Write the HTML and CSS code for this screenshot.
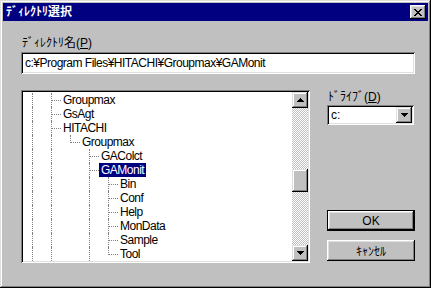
FILE: index.html
```html
<!DOCTYPE html>
<html lang="ja">
<head>
    <meta charset="utf-8">
    <title>ﾃﾞｨﾚｸﾄﾘ選択</title>
    <link rel="stylesheet" href="styles.css">
</head>
<body>
<div class="dlg">
    <div class="caption">
        <span class="caption_txt">ﾃﾞｨﾚｸﾄﾘ選択</span>
        <a href="#none" class="btn_close">
            <svg width="8" height="7" viewBox="0 0 8 7"><path d="M0 0h2v1h-2z M6 0h2v1h-2z M1 1h2v1h-2z M5 1h2v1h-2z M2 2h4v1h-4z M3 3h2v1h-2z M2 4h4v1h-4z M1 5h2v1h-2z M5 5h2v1h-2z M0 6h2v1h-2z M6 6h2v1h-2z" fill="#000"/></svg>
        </a>
    </div>
    <div class="dlg_body">
        <p class="lbl">ﾃﾞｨﾚｸﾄﾘ名(<u>P</u>)</p>
        <div class="field path">c:¥Program Files¥HITACHI¥Groupmax¥GAMonit</div>
        <div class="lowerZone">
            <div class="field treeBox">
                <ul class="tree">
                    <li class="row"><span class="g v"></span><span class="g t"></span><span class="txt">Groupmax</span></li>
                    <li class="row"><span class="g v"></span><span class="g t"></span><span class="txt">GsAgt</span></li>
                    <li class="row"><span class="g v"></span><span class="g t"></span><span class="txt">HITACHI</span></li>
                    <li class="row"><span class="g v"></span><span class="g v"></span><span class="g l"></span><span class="txt">Groupmax</span></li>
                    <li class="row"><span class="g v"></span><span class="g v"></span><span class="g"></span><span class="g t"></span><span class="txt">GAColct</span></li>
                    <li class="row sel"><span class="g v"></span><span class="g v"></span><span class="g"></span><span class="g t"></span><span class="txt">GAMonit</span></li>
                    <li class="row"><span class="g v"></span><span class="g v"></span><span class="g"></span><span class="g v"></span><span class="g t"></span><span class="txt">Bin</span></li>
                    <li class="row"><span class="g v"></span><span class="g v"></span><span class="g"></span><span class="g v"></span><span class="g t"></span><span class="txt">Conf</span></li>
                    <li class="row"><span class="g v"></span><span class="g v"></span><span class="g"></span><span class="g v"></span><span class="g t"></span><span class="txt">Help</span></li>
                    <li class="row"><span class="g v"></span><span class="g v"></span><span class="g"></span><span class="g v"></span><span class="g t"></span><span class="txt">MonData</span></li>
                    <li class="row"><span class="g v"></span><span class="g v"></span><span class="g"></span><span class="g v"></span><span class="g t"></span><span class="txt">Sample</span></li>
                    <li class="row"><span class="g v"></span><span class="g v"></span><span class="g"></span><span class="g v"></span><span class="g l"></span><span class="txt">Tool</span></li>
                </ul>
                <div class="vscroll">
                    <span class="sbtn"><svg width="7" height="4" viewBox="0 0 7 4"><path d="M3 0h1v1h-1z M2 1h3v1h-3z M1 2h5v1h-5z M0 3h7v1h-7z" fill="#000"/></svg></span>
                    <span class="track"><span class="thumb"></span></span>
                    <span class="sbtn"><svg width="7" height="4" viewBox="0 0 7 4"><path d="M0 0h7v1h-7z M1 1h5v1h-5z M2 2h3v1h-3z M3 3h1v1h-1z" fill="#000"/></svg></span>
                </div>
            </div>
            <div class="sideZone">
                <p class="lbl">ﾄﾞﾗｲﾌﾞ(<u>D</u>)</p>
                <div class="field combo">
                    <span class="combo_val">c:</span>
                    <span class="sbtn"><svg width="7" height="4" viewBox="0 0 7 4"><path d="M0 0h7v1h-7z M1 1h5v1h-5z M2 2h3v1h-3z M3 3h1v1h-1z" fill="#000"/></svg></span>
                </div>
                <div class="btnZone">
                    <a href="#none" class="btn default">OK</a>
                    <a href="#none" class="btn">ｷｬﾝｾﾙ</a>
                </div>
            </div>
        </div>
    </div>
</div>
</body>
</html>
```

FILE: styles.css
```css
*{padding: 0;margin: 0;box-sizing: border-box;}
body{background-color: #c0c0c0;font-family: "Liberation Sans", "Noto Sans CJK JP", sans-serif;font-size: 12px;color: #000;}
ul{list-style: none;}
a{color: #000;text-decoration: none;}
svg{display: block;}

/* window */
.dlg{width: 431px;height: 288px;padding: 3px;background-color: #c0c0c0;box-shadow: inset -1px -1px #000, inset 1px 1px #dfdfdf, inset -2px -2px #808080, inset 2px 2px #fff;}
.caption{display: flex;align-items: center;justify-content: space-between;height: 18px;padding: 0 2px 0 3px;background-color: #000080;color: #fff;}
.caption_txt{font-weight: bold;line-height: 18px;}
.btn_close{display: flex;align-items: center;justify-content: center;width: 16px;height: 14px;background-color: #c0c0c0;box-shadow: inset -1px -1px #000, inset 1px 1px #fff, inset -2px -2px #808080, inset 2px 2px #dfdfdf;}

.dlg_body{padding: 15px 13px 0 18px;}
.lbl{line-height: 14px;padding-left: 1px;}
.field{background-color: #fff;box-shadow: inset 1px 1px #808080, inset -1px -1px #fff, inset 2px 2px #000, inset -2px -2px #dfdfdf;}
.path{display: flex;align-items: center;height: 22px;margin-top: 2px;padding: 0 4px;letter-spacing: -0.5px;white-space: nowrap;}

/* tree */
.lowerZone{display: flex;gap: 17px;margin-top: 16px;}
.treeBox{display: flex;width: 289px;height: 173px;padding: 2px;}
.tree{flex: 1;padding-top: 1px;overflow: hidden;}
.row{display: flex;height: 14px;}
.g{position: relative;flex: none;width: 19px;height: 14px;}
.g.v::before, .g.t::before{content: "";position: absolute;left: 9px;top: 0;bottom: 0;border-left: 1px dotted #808080;}
.g.l::before{content: "";position: absolute;left: 9px;top: 0;height: 8px;border-left: 1px dotted #808080;}
.g.t::after, .g.l::after{content: "";position: absolute;left: 10px;top: 7px;width: 9px;border-top: 1px dotted #808080;}
.txt{padding: 0 2px;line-height: 14px;letter-spacing: -0.5px;white-space: nowrap;}
.row.sel .txt{background-color: #000080;color: #fff;outline: 1px dotted #000;outline-offset: -1px;}

/* scrollbar */
.vscroll{display: flex;flex-direction: column;flex: none;width: 16px;}
.sbtn{display: flex;align-items: center;justify-content: center;flex: none;width: 16px;height: 16px;background-color: #c0c0c0;box-shadow: inset -1px -1px #000, inset 1px 1px #dfdfdf, inset -2px -2px #808080, inset 2px 2px #fff;}
.track{flex: 1;background: repeating-conic-gradient(#c0c0c0 0 25%, #fff 0 50%) 0 0 / 2px 2px;}
.thumb{display: block;height: 23px;margin-top: 61px;background-color: #c0c0c0;box-shadow: inset -1px -1px #000, inset 1px 1px #dfdfdf, inset -2px -2px #808080, inset 2px 2px #fff;}

/* side */
.sideZone{display: flex;flex-direction: column;width: 88px;}
.combo{display: flex;align-items: center;width: 87px;height: 20px;margin-top: 1px;padding: 2px;}
.combo_val{flex: 1;padding-left: 2px;line-height: 16px;}
.btnZone{display: flex;flex-direction: column;gap: 9px;margin-top: auto;padding-bottom: 2px;}
.btn{display: flex;align-items: center;justify-content: center;height: 21px;background-color: #c0c0c0;box-shadow: inset -1px -1px #000, inset 1px 1px #fff, inset -2px -2px #808080, inset 2px 2px #dfdfdf;}
.btn.default{box-shadow: inset 0 0 0 1px #000, inset -2px -2px #000, inset 2px 2px #fff, inset -3px -3px #808080, inset 3px 3px #dfdfdf;}
```
